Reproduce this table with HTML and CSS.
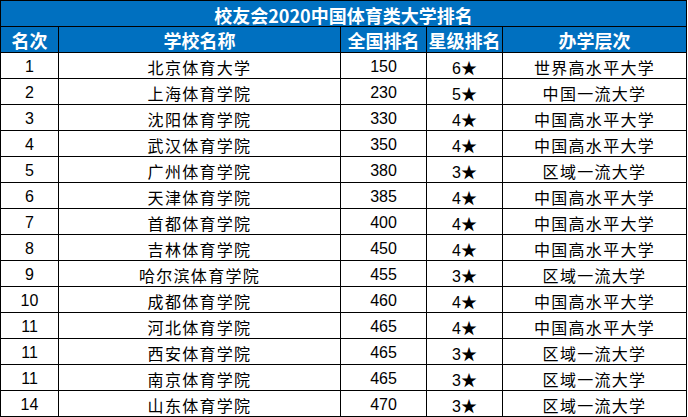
FILE: index.html
```html
<!DOCTYPE html>
<html lang="zh">
<head>
<meta charset="utf-8">
<link rel="stylesheet" href="styles.css">
</head>
<body>
<div class="table">
  <div class="title">校友会2020中国体育类大学排名</div>
  <div class="hd">名次</div>
  <div class="hd">学校名称</div>
  <div class="hd">全国排名</div>
  <div class="hd">星级排名</div>
  <div class="hd">办学层次</div>

  <div class="c num">1</div><div class="c cn">北京体育大学</div><div class="c num">150</div><div class="c num">6★</div><div class="c cn">世界高水平大学</div>
  <div class="c num">2</div><div class="c cn">上海体育学院</div><div class="c num">230</div><div class="c num">5★</div><div class="c cn">中国一流大学</div>
  <div class="c num">3</div><div class="c cn">沈阳体育学院</div><div class="c num">330</div><div class="c num">4★</div><div class="c cn">中国高水平大学</div>
  <div class="c num">4</div><div class="c cn">武汉体育学院</div><div class="c num">350</div><div class="c num">4★</div><div class="c cn">中国高水平大学</div>
  <div class="c num">5</div><div class="c cn">广州体育学院</div><div class="c num">380</div><div class="c num">3★</div><div class="c cn">区域一流大学</div>
  <div class="c num">6</div><div class="c cn">天津体育学院</div><div class="c num">385</div><div class="c num">4★</div><div class="c cn">中国高水平大学</div>
  <div class="c num">7</div><div class="c cn">首都体育学院</div><div class="c num">400</div><div class="c num">4★</div><div class="c cn">中国高水平大学</div>
  <div class="c num">8</div><div class="c cn">吉林体育学院</div><div class="c num">450</div><div class="c num">4★</div><div class="c cn">中国高水平大学</div>
  <div class="c num">9</div><div class="c cn">哈尔滨体育学院</div><div class="c num">455</div><div class="c num">3★</div><div class="c cn">区域一流大学</div>
  <div class="c num">10</div><div class="c cn">成都体育学院</div><div class="c num">460</div><div class="c num">4★</div><div class="c cn">中国高水平大学</div>
  <div class="c num">11</div><div class="c cn">河北体育学院</div><div class="c num">465</div><div class="c num">4★</div><div class="c cn">中国高水平大学</div>
  <div class="c num">11</div><div class="c cn">西安体育学院</div><div class="c num">465</div><div class="c num">3★</div><div class="c cn">区域一流大学</div>
  <div class="c num">11</div><div class="c cn">南京体育学院</div><div class="c num">465</div><div class="c num">3★</div><div class="c cn">区域一流大学</div>
  <div class="c num">14</div><div class="c cn">山东体育学院</div><div class="c num">470</div><div class="c num">3★</div><div class="c cn">区域一流大学</div>
</div>
</body>
</html>
```
FILE: styles.css
```css
html, body {
  margin: 0;
  padding: 0;
  background: #ffffff;
}

.table {
  display: grid;
  grid-template-columns: 58px 282px 86px 76px 184px;
  grid-auto-rows: 26px;
  width: 686px;
  border-left: 1px solid #000;
  border-top: 1px solid #000;
}

.table > div {
  box-sizing: border-box;
  border-right: 1px solid #000;
  border-bottom: 1px solid #000;
  display: flex;
  align-items: center;
  justify-content: center;
  white-space: nowrap;
}

.title {
  grid-column: 1 / -1;
  background: #0070c0;
  color: #ffffff;
  font-family: "Noto Sans CJK SC", sans-serif;
  font-weight: 700;
  font-size: 18px;
  padding-top: 2px;
}

.hd {
  background: #0070c0;
  color: #ffffff;
  font-family: "Noto Sans CJK SC", sans-serif;
  font-weight: 700;
  font-size: 18px;
}

.c {
  background: #ffffff;
  color: #000000;
  font-size: 16px;
  padding-top: 2px;
}

.num {
  font-family: "Liberation Sans", "Noto Sans CJK SC", sans-serif;
}

.cn {
  font-family: "Noto Sans CJK SC", sans-serif;
  letter-spacing: 1.3px;
}
```
